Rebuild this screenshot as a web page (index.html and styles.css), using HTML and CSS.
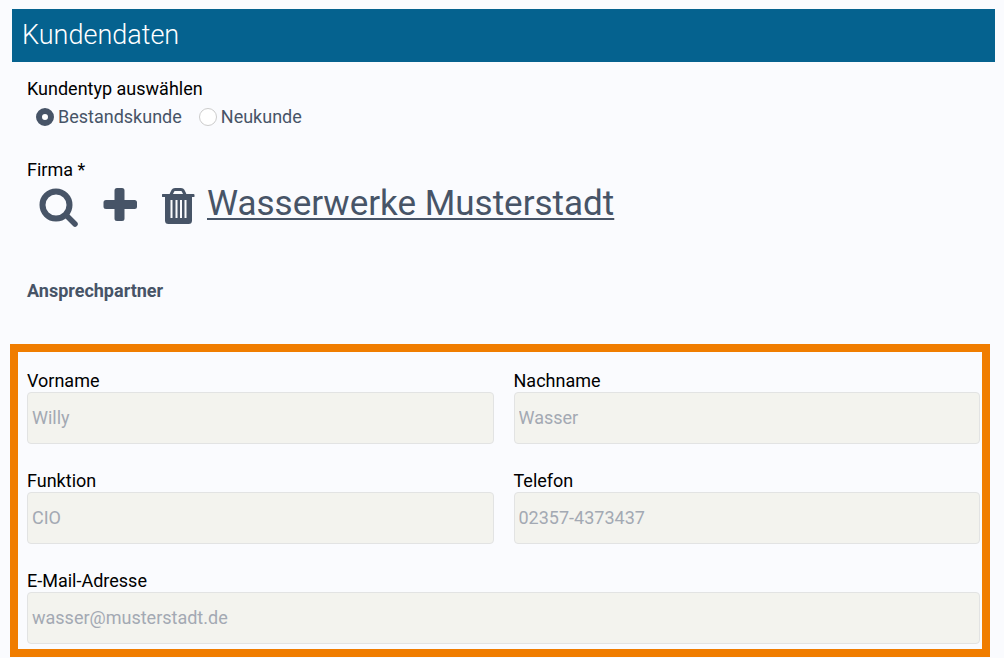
FILE: index.html
```html
<!DOCTYPE html>
<html lang="de">
  <head>
    <meta charset="UTF-8" />
    <meta name="viewport" content="width=device-width, initial-scale=1.0" />
    <title>Kundendaten</title>
    <link rel="stylesheet" href="styles.css" />
  </head>
  <body>
    <form id="customerForm">
      <h1>Kundendaten</h1>

      <fieldset class="customer-type">
        <legend>Kundentyp auswählen</legend>
        <div class="radio-group">
          <label class="radio" for="existing">
            <input type="radio" id="existing" name="customerType" value="existing" checked />
            Bestandskunde
          </label>
          <label class="radio" for="new">
            <input type="radio" id="new" name="customerType" value="new" />
            Neukunde
          </label>
        </div>
      </fieldset>

      <div class="company">
        <div class="company-label">Firma *</div>
        <div class="company-row">
          <button type="button" class="icon-button" aria-label="Firma suchen">
            <svg width="42" height="42" viewBox="0 0 42 42">
              <circle cx="18" cy="18" r="13.5" fill="none" stroke="currentColor" stroke-width="6" />
              <path d="M28 28L37 37" stroke="currentColor" stroke-width="5.5" stroke-linecap="round" />
            </svg>
          </button>
          <button type="button" class="icon-button" aria-label="Firma hinzufügen">
            <svg width="42" height="42" viewBox="0 0 42 42">
              <path d="M17 1h5a2.5 2.5 0 0 1 2.500 2.500V13H34.500a2.500 2.500 0 0 1 2.500 2.500v4a2.500 2.500 0 0 1-2.500 2.500H24.500v9.500a2.500 2.500 0 0 1-2.500 2.500h-5a2.500 2.500 0 0 1-2.500-2.500V22H6a2.500 2.500 0 0 1-2.500-2.500v-4A2.500 2.500 0 0 1 6 13h8.500V3.500A2.500 2.500 0 0 1 17 1z" fill="currentColor" />
            </svg>
          </button>
          <button type="button" class="icon-button" aria-label="Firma entfernen">
            <svg width="42" height="42" viewBox="0 0 42 42">
              <path d="M14 7.500l2-4Q16.500 2.500 18 2.500h6q1.500 0 2 1l2 4" fill="none" stroke="currentColor" stroke-width="3" />
              <path d="M5.500 7h31q1 0 1 1v1.500q0 .5-1 .5H35v23.500q0 3.500-3.500 3.500h-20Q8 37 8 33.500V10H6q-1 0-1-.5V8q0-1 .5-1z" fill="currentColor" />
              <path d="M14.500 13v18M19.500 13v18M24 13v18M28.500 13v18" class="trash-gap" />
            </svg>
          </button>
          <a href="#" class="company-name">Wasserwerke Musterstadt</a>
        </div>
      </div>

      <h2>Ansprechpartner</h2>

      <div class="contact">
        <div class="input-group">
          <label for="firstName">Vorname</label>
          <input type="text" id="firstName" value="Willy" disabled />
        </div>
        <div class="input-group">
          <label for="lastName">Nachname</label>
          <input type="text" id="lastName" value="Wasser" disabled />
        </div>
        <div class="input-group">
          <label for="role">Funktion</label>
          <input type="text" id="role" value="CIO" disabled />
        </div>
        <div class="input-group">
          <label for="phone">Telefon</label>
          <input type="tel" id="phone" value="02357-4373437" disabled />
        </div>
        <div class="input-group full">
          <label for="email">E-Mail-Adresse</label>
          <input type="email" id="email" value="wasser@musterstadt.de" disabled />
        </div>
      </div>
    </form>
  </body>
</html>
```

FILE: styles.css
```css
* {
  box-sizing: border-box;
  margin: 0;
  padding: 0;
}

body {
  padding: 9px 9px 0 10px;
  background-color: #fafbfe;
  color: #000000;
  font-family: Roboto, sans-serif;
  font-size: 18px;
  line-height: 24px;
}

h1 {
  margin-left: 2px;
  padding: 8px 10px;
  background-color: #05628f;
  color: #ffffff;
  font-size: 27px;
  font-weight: 300;
  line-height: 37px;
}

/* Customer type */
.customer-type {
  margin: 15px 17px 0;
  border: none;
}

.radio-group {
  display: flex;
  gap: 17px;
  margin-top: 4px;
  padding-left: 9px;
}

.radio {
  display: flex;
  align-items: center;
  gap: 4px;
  color: #475467;
}

.radio input {
  appearance: none;
  width: 18px;
  height: 18px;
  border: 1px solid #cccccc;
  border-radius: 50%;
  background-color: #ffffff;
}

.radio input:checked {
  border: 6px solid #475467;
}

/* Company */
.company {
  margin: 29px 17px 0;
}

.company-row {
  display: flex;
  align-items: flex-start;
  padding-left: 11px;
}

.icon-button {
  margin: 5px 20px 0 0;
  border: none;
  background: none;
  color: #475467;
  cursor: pointer;
}

.icon-button svg {
  display: block;
}

.icon-button:nth-of-type(2) {
  margin-right: 15px;
}

.icon-button:nth-of-type(3) {
  margin-right: 8px;
}

.trash-gap {
  stroke: #fafbfe;
  stroke-width: 2;
}

.company-name {
  color: #475467;
  font-size: 35px;
  line-height: 44px;
  text-underline-offset: 3px;
  text-decoration-thickness: 2px;
}

h2 {
  margin: 50px 17px 0;
  color: #475467;
  font-size: 18px;
  font-weight: 700;
}

/* Contact person */
.contact {
  display: grid;
  grid-template-columns: 1fr 1fr;
  gap: 25px 20px;
  margin: 41px 5px 0 0;
  padding: 17px 2px 5px 9px;
  border: 8px solid #f07d00;
}

.full {
  grid-column: 1 / -1;
}

.input-group label {
  display: block;
  line-height: 23px;
}

.input-group input {
  display: block;
  width: 100%;
  height: 52px;
  padding: 0 4px 2px;
  border: 1px solid #e2e3e3;
  border-radius: 4px;
  background-color: #f3f3ee;
  color: #a3a9b3;
  font-family: inherit;
  font-size: 18px;
}

@media (max-width: 600px) {
  .contact {
    grid-template-columns: 1fr;
  }

  .company-row {
    flex-wrap: wrap;
  }
}
```
